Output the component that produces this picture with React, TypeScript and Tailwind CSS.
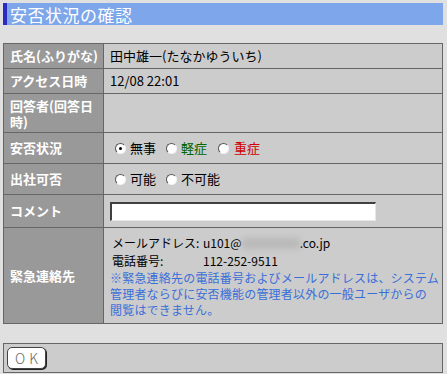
import React from "react"

const font = { fontFamily: '"MS Gothic", "Noto Sans CJK JP", "Liberation Sans", sans-serif' }

function Radio({ checked = false }: { checked?: boolean }) {
  return (
    <span className="relative inline-block w-[11px] h-[11px] rounded-full bg-white border border-t-[#555] border-l-[#555] border-b-[#f4f4f4] border-r-[#f4f4f4] shrink-0">
      {checked && <span className="absolute left-[3px] top-[3px] w-[3px] h-[3px] rounded-full bg-black" />}
    </span>
  )
}

function Row({ label, h, children, top = false }: { label: React.ReactNode; h: string; children?: React.ReactNode; top?: boolean }) {
  return (
    <div className={`flex border-b border-[#666] last:border-b-0 ${h}`}>
      <div
        className={`w-[100px] shrink-0 bg-[#999] border-r border-[#666] pl-[6px] text-white font-bold text-[13px] whitespace-nowrap flex ${top ? "flex-col pt-[4px] leading-[16px]" : "items-center leading-[14px]"}`}
      >
        {label}
      </div>
      <div className="flex-1 bg-[#cccccc] pl-[6px] flex items-center text-[13px] text-black">{children}</div>
    </div>
  )
}

export default function App() {
  return (
    <div className="w-[447px] h-[374px] bg-[#e0e0e0] pt-[3px] px-[3px] overflow-hidden" style={font}>
      {/* Title */}
      <div className="w-[440px] h-[22px] bg-[#7ea6ea] flex items-center">
        <div className="w-[4px] h-full bg-[#2b2bc4]" />
        <h1 className="pl-[3px] text-white text-[17px] leading-none tracking-[0.5px]">安否状況の確認</h1>
      </div>

      {/* Table */}
      <div className="mt-[18px] w-[440px] border border-[#666]">
        <Row label={<span>氏名(ふりがな)</span>} h="h-[25px]">田中雄一(たなかゆういち)</Row>
        <Row label={<span>アクセス日時</span>} h="h-[25px]">12/08 22:01</Row>
        <Row
          label={
            <>
              <span className="block">回答者(回答日</span>
              <span className="block">時)</span>
            </>
          }
          h="h-[39px]"
          top
        />
        <Row label={<span>安否状況</span>} h="h-[31px]">
          <div className="flex items-center pl-[5px]">
            <Radio checked />
            <span className="ml-[4px]">無事</span>
            <span className="ml-[10px] flex"><Radio /></span>
            <span className="ml-[4px] text-[#006600]">軽症</span>
            <span className="ml-[11px] flex"><Radio /></span>
            <span className="ml-[5px] text-[#cc0000]">重症</span>
          </div>
        </Row>
        <Row label={<span>出社可否</span>} h="h-[31px]">
          <div className="flex items-center pl-[5px]">
            <Radio />
            <span className="ml-[4px]">可能</span>
            <span className="ml-[10px] flex"><Radio /></span>
            <span className="ml-[4px]">不可能</span>
          </div>
        </Row>
        <Row label={<span>コメント</span>} h="h-[33px]">
          <input
            type="text"
            className="w-[266px] h-[19px] bg-white border-t-2 border-l-2 border-b border-r border-t-[#404040] border-l-[#404040] border-b-[#e8e8e8] border-r-[#e8e8e8] outline-none"
          />
        </Row>
        <Row label={<span>緊急連絡先</span>} h="h-[95px]">
          <div className="flex flex-col self-start pt-[6px] text-[12px]">
            <div className="grid grid-cols-[91px_1fr] pl-[2px] leading-[18px]">
              <span>メールアドレス:</span>
              <span className="flex items-center">
                u101@
                <span className="inline-block w-[58px] h-[11px] bg-[#b4b4b4] blur-[3px] opacity-80" />
                .co.jp
              </span>
              <span>電話番号:</span>
              <span>112-252-9511</span>
            </div>
            <p className="text-[#3a6fd8] leading-[16px] whitespace-nowrap tracking-[0.2px]">
              ※緊急連絡先の電話番号およびメールアドレスは、システム
              <br />
              管理者ならびに安否機能の管理者以外の一般ユーザからの
              <br />
              閲覧はできません。
            </p>
          </div>
        </Row>
      </div>

      {/* Footer */}
      <div className="mt-[19px] w-[440px] h-[30px] border border-[#666] bg-[#cccccc] flex items-center pl-[3px]">
        <button className="w-[39px] h-[22px] bg-white rounded-[5px] border border-[#444] shadow-[1px_1px_0_#222] text-[#666] text-[14px] font-light tracking-[4px] pl-[4px] leading-none">
          OK
        </button>
      </div>
    </div>
  )
}
